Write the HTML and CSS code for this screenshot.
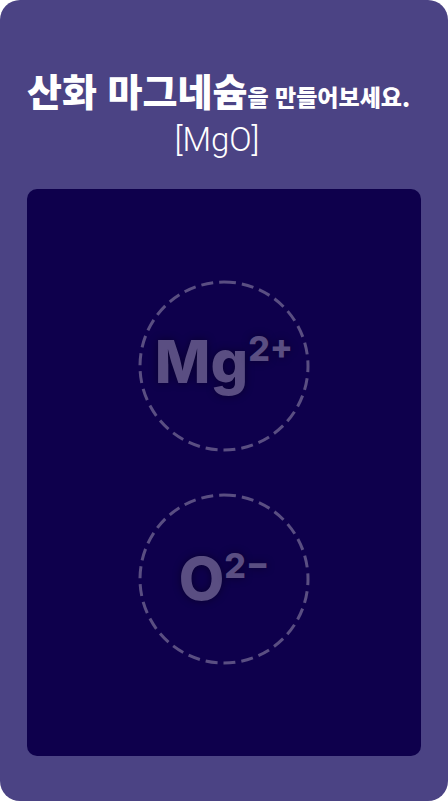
FILE: index.html
```html
<!DOCTYPE html>
<html lang="ko">
<head>
<meta charset="utf-8">
<meta name="viewport" content="width=device-width, initial-scale=1">
<title>산화 마그네슘</title>
<link rel="stylesheet" href="styles.css">
</head>
<body>
<main class="card">
  <header class="header">
    <h1 class="title"><strong class="compound">산화 마그네슘</strong>을 만들어보세요.</h1>
    <p class="formula">[MgO]</p>
  </header>
  <section class="board">
    <div class="slot">
      <svg class="ring" viewBox="0 0 172 172" aria-hidden="true"><path d="M86 2a84 84 0 0 1 0 168a84 84 0 0 1 0-168"/></svg>
      <span class="ion ion-descender">Mg<sup class="charge">2+</sup></span>
    </div>
    <div class="slot">
      <svg class="ring" viewBox="0 0 172 172" aria-hidden="true"><path d="M86 2a84 84 0 0 1 0 168a84 84 0 0 1 0-168"/></svg>
      <span class="ion">O<sup class="charge">2−</sup></span>
    </div>
  </section>
</main>
</body>
</html>
```
FILE: styles.css
```css
* {
  box-sizing: border-box;
}

body {
  margin: 0;
  background: #fff;
}

.card {
  display: flex;
  flex-direction: column;
  min-height: 100vh;
  padding: 64px 27px 45px;
  border-radius: 20px;
  background: #4b4384;
  color: #fff;
}

.header {
  margin-bottom: 31px;
  padding-right: 14px;
  text-align: center;
  white-space: nowrap;
}

.title {
  margin: 0;
  font: 900 23px/52px "Noto Sans CJK KR", sans-serif;
}

.compound {
  font-size: 38px;
  font-weight: 900;
}

.formula {
  margin: 0;
  font: 300 33px/36px Roboto, sans-serif;
}

.board {
  display: flex;
  flex: 1;
  flex-direction: column;
  align-items: center;
  justify-content: center;
  gap: 41px;
  border-radius: 10px;
  background: #0e004c;
}

.slot {
  display: grid;
  place-items: center;
  width: 172px;
  height: 172px;
}

.ring,
.ion {
  grid-area: 1 / 1;
}

.ring {
  width: 100%;
  fill: none;
  stroke: #5a4e82;
  stroke-width: 3;
  stroke-dasharray: 12 6;
}

.ion {
  color: #5a4e82;
  font: 800 59px/72px Inter, sans-serif;
  text-shadow: 0 0 8px rgb(0 0 0 / 40%);
}

.ion-descender {
  padding-bottom: 8px;
}

.charge {
  font-size: 34px;
  line-height: 0;
  vertical-align: 22px;
}
```
